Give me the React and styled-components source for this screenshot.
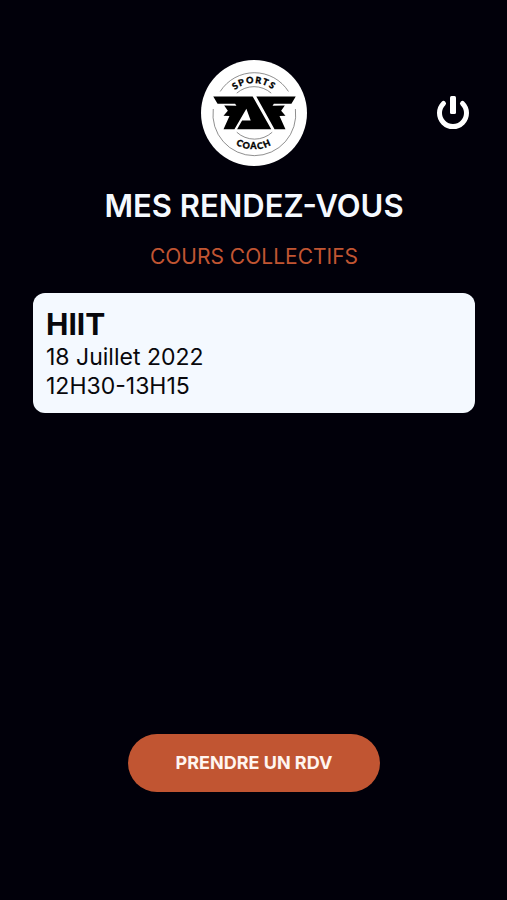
import React from "react";
import styled, { createGlobalStyle } from "styled-components";

const GlobalStyle = createGlobalStyle`
  * {
    box-sizing: border-box;
  }
  body {
    margin: 0;
    background: #01000a;
    font-family: Inter, "Liberation Sans", sans-serif;
  }
`;

const Screen = styled.main`
  display: flex;
  flex-direction: column;
  min-height: 100vh;
  padding: 60px 32px 108px 33px;
`;
const Header = styled.header`
  display: grid;
  grid-template-columns: 1fr auto 1fr;
  align-items: center;
`;
const LogoImage = styled.svg`
  grid-column: 2;
  width: 106px;
  height: 106px;
  display: block;
`;
const LogoText = styled.text`
  font-family: Lato, sans-serif;
  font-size: 27px;
  font-weight: 900;
  text-anchor: middle;
  letter-spacing: 4px;
  stroke: black;
  stroke-width: 1px;
`;
const LogoutButton = styled.button`
  justify-self: end;
  display: flex;
  padding: 4px;
  border: none;
  background: none;
  color: white;
  cursor: pointer;
`;
const Title = styled.h1`
  margin: 20px 0 0;
  font-size: 31px;
  line-height: 40px;
  font-weight: 600;
  text-align: center;
  color: #f5f9ff;
`;
const Subtitle = styled.h2`
  margin: 17px 0 0;
  font-size: 21px;
  line-height: 28px;
  font-weight: 400;
  text-align: center;
  color: #c15532;
`;
const Card = styled.article`
  margin-top: 22px;
  padding: 15px 13px 12px;
  border-radius: 12px;
  background: #f4f9ff;
  color: #08080c;
`;
const CardTitle = styled.h3`
  margin: 0 0 3px;
  font-size: 30px;
  line-height: 32px;
  font-weight: 700;
`;
const CardLine = styled.p`
  margin: 0;
  font-size: 23px;
  line-height: 29px;
  font-weight: 400;
`;
const BookButton = styled.button`
  align-self: center;
  margin-top: auto;
  padding: 17px 48px;
  border: none;
  border-radius: 30px;
  background: #c15532;
  color: #fff5f0;
  font-family: inherit;
  font-size: 18px;
  line-height: 24px;
  font-weight: 700;
  cursor: pointer;
`;

const sessions = [{ name: "HIIT", date: "18 Juillet 2022", time: "12H30-13H15" }];

const Logo = () => (
  <LogoImage viewBox="20 22 320 320" role="img" aria-label="Sports Coach">
    <circle cx="180" cy="182" r="160" fill="white" />
    <g fill="none" stroke="#555" strokeWidth="2">
      <path d="M78 117A122 122 0 0 1 284 117" />
      <path d="M128 122A79 79 0 0 1 232 122" />
      <path d="M57 170A125 125 0 1 0 305 170" />
      <path d="M128 240A79 79 0 0 0 235 240" />
    </g>
    <path d="M57 132H176L232 231H129L144 205H170L157 169L121 231H88L106 191L88 190L101 175L90 159L127 160L123 154H70Z" />
    <path d="M187 132H306L293 154H240L236 160L273 159L262 175L275 190L257 191L275 231H242Z" />
    <defs>
      <path id="logo-top" d="M90 182A90 90 0 0 1 270 182" />
      <path id="logo-bottom" d="M70 182A110 110 0 0 0 290 182" />
    </defs>
    <LogoText>
      <textPath href="#logo-top" startOffset="50%">
        SPORTS
      </textPath>
    </LogoText>
    <LogoText>
      <textPath href="#logo-bottom" startOffset="50%">
        COACH
      </textPath>
    </LogoText>
  </LogoImage>
);

const PowerIcon = () => (
  <svg
    width="36"
    height="36"
    viewBox="0 0 36 36"
    fill="none"
    stroke="currentColor"
    strokeWidth="5"
    strokeLinecap="round"
    aria-hidden="true"
  >
    <path d="M8.5 8.5A13.5 13.5 0 1 0 27.5 8.5" />
    <rect x="15" y="1" width="6" height="18" rx="1.5" fill="currentColor" stroke="none" />
  </svg>
);

const App = () => (
  <>
    <GlobalStyle />
    <Screen>
      <Header>
        <Logo />
        <LogoutButton type="button" aria-label="Se déconnecter">
          <PowerIcon />
        </LogoutButton>
      </Header>
      <Title>MES RENDEZ-VOUS</Title>
      <Subtitle>COURS COLLECTIFS</Subtitle>
      {sessions.map((session) => (
        <Card key={session.name}>
          <CardTitle>{session.name}</CardTitle>
          <CardLine>{session.date}</CardLine>
          <CardLine>{session.time}</CardLine>
        </Card>
      ))}
      <BookButton type="button">PRENDRE UN RDV</BookButton>
    </Screen>
  </>
);

export default App;
